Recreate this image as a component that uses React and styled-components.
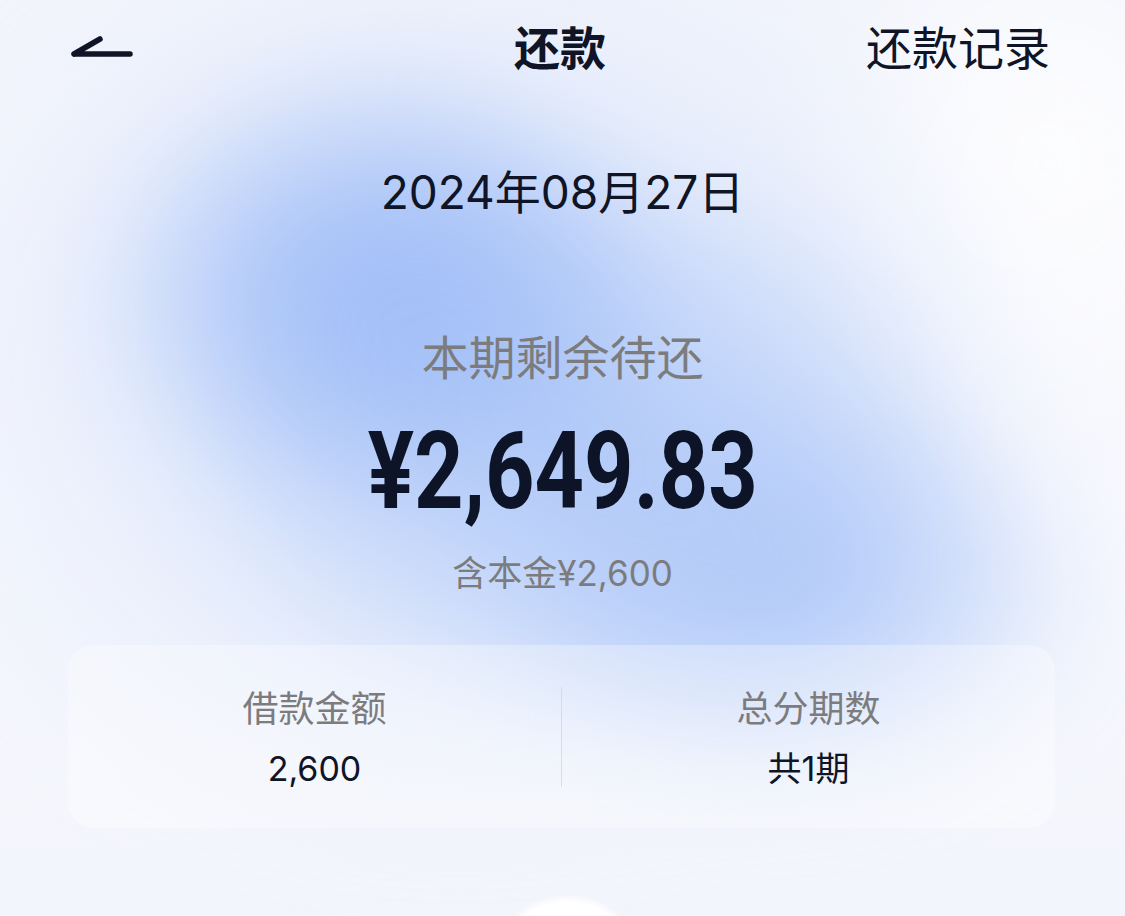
import React from "react";
import styled, { createGlobalStyle } from "styled-components";

const GlobalStyle = createGlobalStyle`
  html, body {
    margin: 0;
    padding: 0;
    background: #f6f8fd;
  }
  body {
    font-family: "Inter", "Noto Sans CJK SC", sans-serif;
    -webkit-font-smoothing: antialiased;
  }
`;

const Page = styled.div`
  position: relative;
  width: 1125px;
  min-height: 916px;
  overflow: hidden;
  background: linear-gradient(180deg, #f3f5fc 0%, #f8f9fe 55%, #f3f5fc 100%);

  /* soft blue glow behind the summary */
  &::before {
    content: "";
    position: absolute;
    inset: -100px;
    z-index: 0;
    background:
      radial-gradient(ellipse 300px 240px at 485px 390px, rgba(158, 188, 247, 1) 0%, rgba(158, 188, 247, 0.7) 45%, rgba(158, 188, 247, 0) 100%),
      radial-gradient(ellipse 330px 220px at 880px 680px, rgba(172, 198, 248, 0.95) 0%, rgba(172, 198, 248, 0.55) 50%, rgba(172, 198, 248, 0) 100%),
      radial-gradient(ellipse 420px 300px at 680px 540px, rgba(176, 201, 248, 0.95) 0%, rgba(176, 201, 248, 0.5) 55%, rgba(176, 201, 248, 0) 100%),
      radial-gradient(ellipse 620px 480px at 560px 480px, rgba(210, 223, 250, 0.9) 0%, rgba(210, 223, 250, 0) 100%),
      radial-gradient(ellipse 260px 300px at 1150px 260px, rgba(255, 255, 255, 0.9) 0%, rgba(255, 255, 255, 0) 100%);
    filter: blur(45px);
  }

  & > * {
    position: relative;
    z-index: 1;
  }
`;

const NavBar = styled.header`
  display: grid;
  grid-template-columns: 1fr auto 1fr;
  align-items: center;
  height: 90px;
  padding: 0 75px 0 70px;
`;

const BackButton = styled.button`
  justify-self: start;
  display: flex;
  align-items: center;
  padding: 0;
  margin: 4px 0 0;
  border: none;
  background: none;
  cursor: pointer;
  color: #0f1426;
`;

const Title = styled.h1`
  margin: 0;
  font-family: "Noto Sans CJK SC", sans-serif;
  font-size: 46px;
  font-weight: 700;
  line-height: 60px;
  color: #0f1426;
`;

const RecordLink = styled.a`
  justify-self: end;
  font-family: "Noto Sans CJK SC", sans-serif;
  font-size: 46px;
  font-weight: 400;
  line-height: 60px;
  color: #0f1426;
  text-decoration: none;
`;

const Summary = styled.section`
  display: flex;
  flex-direction: column;
  align-items: center;
`;

const DateText = styled.div`
  margin-top: 72px;
  font-size: 46px;
  line-height: 60px;
  color: #0f1426;
`;

const Label = styled.div`
  margin-top: ${({ $gap }) => $gap || 0}px;
  font-family: "Noto Sans CJK SC", sans-serif;
  font-size: ${({ $size }) => $size || 47}px;
  line-height: 60px;
  color: #7c7c7e;
`;

const Amount = styled.div`
  margin-top: 31px;
  height: 110px;
  display: flex;
  justify-content: center;
  font-family: "Roboto", "Liberation Sans", sans-serif;
  font-size: 108px;
  font-weight: 700;
  line-height: 110px;
  color: #0e1428;

  span {
    display: inline-block;
    transform: scaleX(0.8);
  }
`;

const Principal = styled.div`
  margin-top: 24px;
  font-size: 35px;
  line-height: 46px;
  color: #7c7c7e;
`;

const InfoCard = styled.div`
  display: grid;
  grid-template-columns: 1fr 1px 1fr;
  align-items: center;
  margin: 49px 70px 0 68px;
  border-radius: 26px;
  background: rgba(255, 255, 255, 0.32);
`;

const InfoColumn = styled.div`
  display: flex;
  flex-direction: column;
  align-items: center;
  gap: 18px;
  padding: 38px 0 37px;
`;

const InfoLabel = styled.div`
  font-family: "Noto Sans CJK SC", sans-serif;
  font-size: 36px;
  line-height: 46px;
  color: #7c7c7e;
`;

const InfoValue = styled.div`
  font-size: 34px;
  line-height: 44px;
  color: #0f1426;
`;

const Divider = styled.div`
  width: 1px;
  height: 100px;
  background: rgba(196, 212, 240, 0.7);
`;

const Dome = styled.div`
  position: absolute !important;
  left: 505px;
  bottom: -82px;
  width: 125px;
  height: 100px;
  border-radius: 50%;
  background: #ffffff;
  filter: blur(3px);
`;

const BackIcon = () => (
  <svg width="64" height="26" viewBox="0 0 64 26" fill="none">
    <path
      d="M4 20 L30 5 M4 20 H60"
      stroke="currentColor"
      strokeWidth="5.5"
      strokeLinecap="round"
      strokeLinejoin="round"
    />
  </svg>
);

const App = () => {
  return (
    <>
      <GlobalStyle />
      <Page>
        <NavBar>
          <BackButton aria-label="返回">
            <BackIcon />
          </BackButton>
          <Title>还款</Title>
          <RecordLink href="#">还款记录</RecordLink>
        </NavBar>
        <Summary>
          <DateText>2024年08月27日</DateText>
          <Label $gap={103}>本期剩余待还</Label>
          <Amount>
            <span>¥2,649.83</span>
          </Amount>
          <Principal>含本金¥2,600</Principal>
        </Summary>
        <InfoCard>
          <InfoColumn>
            <InfoLabel>借款金额</InfoLabel>
            <InfoValue>2,600</InfoValue>
          </InfoColumn>
          <Divider />
          <InfoColumn>
            <InfoLabel>总分期数</InfoLabel>
            <InfoValue>共1期</InfoValue>
          </InfoColumn>
        </InfoCard>
        <Dome />
      </Page>
    </>
  );
};

export default App;
